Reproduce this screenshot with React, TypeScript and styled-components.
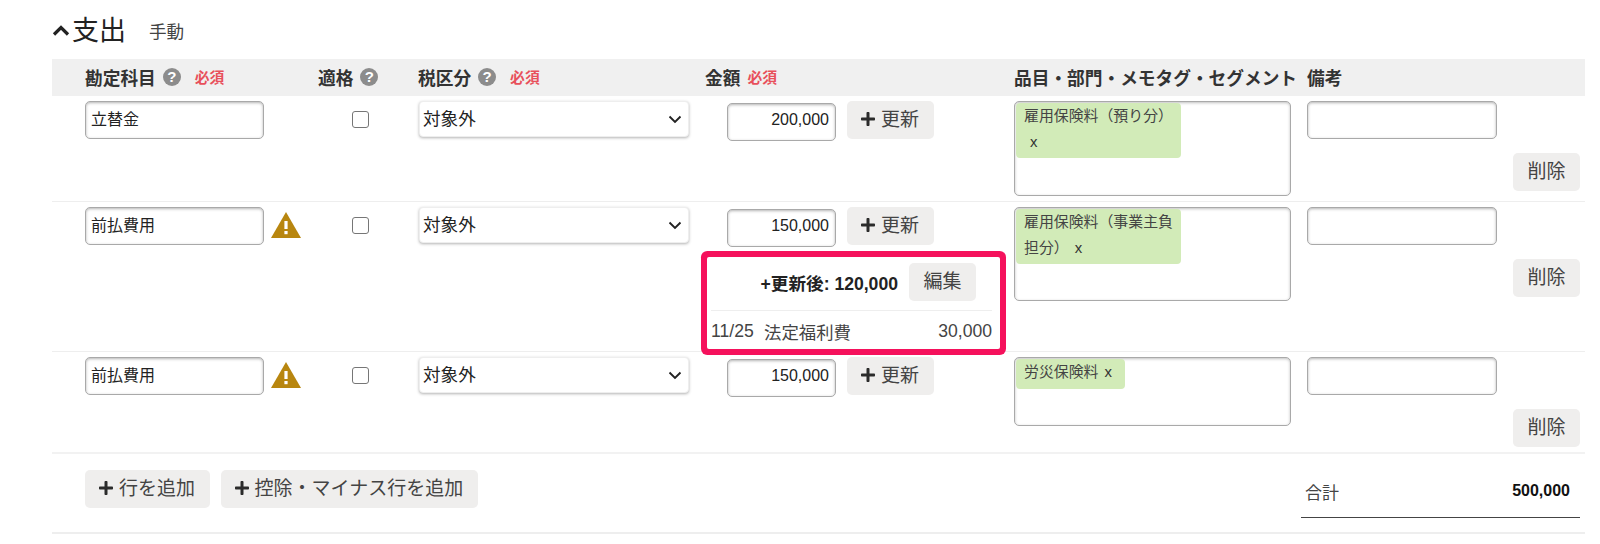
import React from 'react';
import styled, { createGlobalStyle, css } from 'styled-components';
import { FaPlus } from 'react-icons/fa';

const GlobalStyle = createGlobalStyle`
  html, body {
    margin: 0;
    background: #fff;
  }
  body {
    font-family: "Liberation Sans", "Noto Sans CJK JP", sans-serif;
    color: #333;
  }
`;

const columns = css`
  display: grid;
  grid-template-columns: 233px 100px 287px 309px 293px 278px;
  padding-left: 33px;
`;

const Page = styled.div`
  width: 1533px;
  margin-left: 52px;
`;

const TitleRow = styled.div`
  height: 59px;
  display: flex;
  align-items: center;
  padding-bottom: 3px;
  box-sizing: border-box;
`;

const Title = styled.h2`
  margin: 0 0 0 2px;
  font-size: 27px;
  font-weight: 400;
  color: #222;
`;

const Mode = styled.span`
  margin: 4px 0 0 23px;
  font-size: 17.6px;
  color: #444;
`;

const HeaderRow = styled.div`
  ${columns}
  height: 37px;
  padding-bottom: 2px;
  box-sizing: border-box;
  align-items: center;
  background: #f0f0f0;
`;

const HeaderCell = styled.div`
  display: flex;
  align-items: center;
  font-size: 17.7px;
  font-weight: 700;
  color: #333;
  white-space: nowrap;
`;

const Help = styled.span`
  width: 18px;
  height: 18px;
  margin: 1px 0 0 7px;
  border-radius: 50%;
  background: #8c8c8c;
  color: #fff;
  font-size: 15px;
  font-weight: 700;
  line-height: 18px;
  text-align: center;
`;

const Required = styled.span<{ $gap?: number }>`
  margin-left: ${p => p.$gap ?? 14}px;
  font-size: 14.8px;
  font-weight: 700;
  color: #e8505b;
`;

const Row = styled.div<{ $last?: boolean }>`
  ${columns}
  padding-top: 5px;
  padding-bottom: 5px;
  align-items: start;
  border-bottom: ${p => (p.$last ? '2px solid #f2f2f2' : '1px solid #eee')};
`;

const AccountCell = styled.div`
  display: flex;
  align-items: flex-start;
`;

const TextInput = styled.input<{ $width: number; $right?: boolean }>`
  width: ${p => p.$width}px;
  height: 38px;
  box-sizing: border-box;
  padding: 0 6px 4px 5px;
  border: 1px solid #a9a9a9;
  border-radius: 5px;
  box-shadow: inset 0 1px 3px rgba(0, 0, 0, 0.3);
  background: #fff;
  font: 16px "Liberation Sans", "Noto Sans CJK JP", sans-serif;
  color: #222;
  text-align: ${p => (p.$right ? 'right' : 'left')};
`;

const Warning = styled.svg`
  width: 30px;
  height: 26px;
  margin: 5px 0 0 7px;
  flex: none;
`;

const Check = styled.input`
  appearance: none;
  display: block;
  width: 17px;
  height: 17px;
  margin: 10px 0 0 34px;
  box-sizing: border-box;
  border: 1.5px solid #767676;
  border-radius: 3px;
  background: #fff;
`;

const selectArrow = `url("data:image/svg+xml,%3Csvg xmlns='http://www.w3.org/2000/svg' width='14' height='9'%3E%3Cpath d='M1.5 1.5 L7 7 L12.5 1.5' fill='none' stroke='%23222' stroke-width='1.9'/%3E%3C/svg%3E")`;

const TaxSelect = styled.select`
  appearance: none;
  display: block;
  width: 270px;
  height: 36px;
  margin: 0 0 0 1px;
  padding: 0 24px 0 3px;
  box-sizing: border-box;
  border: 1px solid #eee;
  border-radius: 4px;
  box-shadow: 0 1px 3px rgba(0, 0, 0, 0.3);
  background: #fff ${selectArrow} no-repeat right 6px center;
  font: 17.6px "Liberation Sans", "Noto Sans CJK JP", sans-serif;
  color: #222;
`;

const AmountLine = styled.div`
  display: flex;
  align-items: flex-start;
  gap: 11px;
  padding-left: 22px;
  & > input {
    margin-top: 2px;
  }
`;

const Button = styled.button`
  display: inline-flex;
  align-items: center;
  flex: none;
  height: 38px;
  padding: 0 14.5px 5px;
  border: none;
  border-radius: 5px;
  background: #efeeed;
  font: 19px "Liberation Sans", "Noto Sans CJK JP", sans-serif;
  color: #444;
  white-space: nowrap;
  svg {
    width: 16px;
    height: 16px;
    margin: 2px 5px 0 -1.5px;
    color: #2b2b2b;
  }
`;

const UpdatedBox = styled.div`
  width: 281px;
  margin: 10px 0 -3px 2px;
  padding: 0 8px 0 4px;
  border-radius: 2px;
  box-shadow: 0 0 0 6px #f5115c;
  font-size: 17.6px;
`;

const UpdatedHead = styled.div`
  display: flex;
  justify-content: flex-end;
  align-items: center;
  gap: 11px;
  padding: 6px 16px 9px 0;
  border-bottom: 1px solid #eee;
`;

const UpdatedValue = styled.strong`
  font-size: 17.6px;
  color: #222;
`;

const UpdatedLine = styled.div`
  display: flex;
  height: 38px;
  padding-top: 3px;
  box-sizing: border-box;
  align-items: center;
  color: #444;
`;

const UpdatedDate = styled.span`
  width: 53px;
`;

const UpdatedName = styled.span`
  flex: 1;
  font-size: 17.4px;
`;

const TagBox = styled.div<{ $height: number }>`
  width: 277px;
  height: ${p => p.$height}px;
  box-sizing: border-box;
  padding: 0 1px;
  border: 1px solid #a9a9a9;
  border-radius: 5px;
  box-shadow: inset 0 1px 3px rgba(0, 0, 0, 0.25);
  background: #fff;
`;

const Tag = styled.span`
  display: inline-block;
  max-width: 165px;
  box-sizing: border-box;
  margin-top: 1px;
  padding: 1px 6px 3px 8px;
  border-radius: 4px;
  background: #d2ebb8;
  font-size: 14.9px;
  line-height: 25.5px;
  color: #444;
`;

const TagClose = styled.span`
  padding: 0 7px 0 6px;
  color: #333;
`;

const MemoCell = styled.div`
  display: flex;
  flex-direction: column;
  align-items: flex-start;
  padding-right: 5px;
`;

const DeleteButton = styled(Button)`
  align-self: flex-end;
  margin-top: 14px;
`;

const Footer = styled.div`
  display: flex;
  justify-content: space-between;
  align-items: flex-start;
  height: 80px;
  padding: 16px 5px 0 33px;
  box-sizing: border-box;
  border-bottom: 2px solid #eee;
`;

const AddButtons = styled.div`
  display: flex;
  gap: 11px;
`;

const Total = styled.div`
  display: flex;
  justify-content: space-between;
  align-items: center;
  box-sizing: border-box;
  width: 279px;
  height: 48px;
  padding: 0 10px 5px 4px;
  border-bottom: 1.5px solid #444;
  font-size: 17px;
  color: #444;
`;

const TotalValue = styled.strong`
  font-size: 16px;
  color: #111;
`;

const Chevron = () => (
  <svg width="18" height="11" viewBox="0 0 18 11" fill="none" style={{ marginTop: 4 }}>
    <path d="M2 9.5 L9 2.5 L16 9.5" stroke="#222" strokeWidth="3.2" />
  </svg>
);

const WarningIcon = () => (
  <Warning viewBox="0 0 30 26">
    <path d="M15 0 L30 26 L0 26 Z" fill="#b8860f" />
    <rect x="13.4" y="9" width="3.2" height="8" fill="#fff" />
    <rect x="13.4" y="19" width="3.2" height="3.2" fill="#fff" />
  </Warning>
);

type Line = {
  account: string;
  warn: boolean;
  amount: string;
  tag: string;
  boxHeight: number;
  updated?: boolean;
  last?: boolean;
};

const lines: Line[] = [
  { account: '立替金', warn: false, amount: '200,000', tag: '雇用保険料（預り分）', boxHeight: 95 },
  { account: '前払費用', warn: true, amount: '150,000', tag: '雇用保険料（事業主負担分）', boxHeight: 94, updated: true },
  { account: '前払費用', warn: true, amount: '150,000', tag: '労災保険料', boxHeight: 69, last: true },
];

export default function App() {
  return (
    <Page>
      <GlobalStyle />
      <TitleRow>
        <Chevron />
        <Title>支出</Title>
        <Mode>手動</Mode>
      </TitleRow>
      <HeaderRow>
        <HeaderCell>勘定科目<Help>?</Help><Required>必須</Required></HeaderCell>
        <HeaderCell>適格<Help>?</Help></HeaderCell>
        <HeaderCell>税区分<Help>?</Help><Required>必須</Required></HeaderCell>
        <HeaderCell>金額<Required $gap={7}>必須</Required></HeaderCell>
        <HeaderCell>品目・部門・メモタグ・セグメント</HeaderCell>
        <HeaderCell>備考</HeaderCell>
      </HeaderRow>
      {lines.map((line, i) => (
        <Row key={i} $last={line.last}>
          <AccountCell>
            <TextInput $width={179} defaultValue={line.account} />
            {line.warn && <WarningIcon />}
          </AccountCell>
          <div><Check type="checkbox" /></div>
          <div>
            <TaxSelect defaultValue="対象外">
              <option>対象外</option>
            </TaxSelect>
          </div>
          <div>
            <AmountLine>
              <TextInput $width={109} $right defaultValue={line.amount} />
              <Button><FaPlus />更新</Button>
            </AmountLine>
            {line.updated && (
              <UpdatedBox>
                <UpdatedHead>
                  <UpdatedValue>+更新後: 120,000</UpdatedValue>
                  <Button>編集</Button>
                </UpdatedHead>
                <UpdatedLine>
                  <UpdatedDate>11/25</UpdatedDate>
                  <UpdatedName>法定福利費</UpdatedName>
                  <span>30,000</span>
                </UpdatedLine>
              </UpdatedBox>
            )}
          </div>
          <TagBox $height={line.boxHeight}>
            <Tag>{line.tag}<TagClose>x</TagClose></Tag>
          </TagBox>
          <MemoCell>
            <TextInput $width={190} />
            <DeleteButton>削除</DeleteButton>
          </MemoCell>
        </Row>
      ))}
      <Footer>
        <AddButtons>
          <Button><FaPlus />行を追加</Button>
          <Button><FaPlus />控除・マイナス行を追加</Button>
        </AddButtons>
        <Total>
          <span>合計</span>
          <TotalValue>500,000</TotalValue>
        </Total>
      </Footer>
    </Page>
  );
}
